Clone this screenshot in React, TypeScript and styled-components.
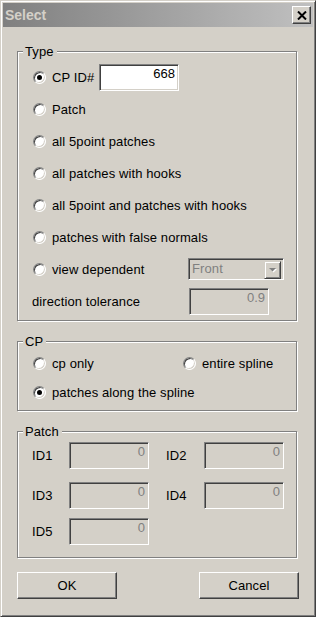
import styled, { createGlobalStyle } from 'styled-components';
import { ReactElement, ReactNode } from 'react';

const GlobalStyle = createGlobalStyle`
  html,
  body {
    margin: 0;
    padding: 0;
    background: #d4d0c8;
  }

  body {
    font-family: "Liberation Sans", Arial, sans-serif;
    font-size: 13px;
    letter-spacing: 0.1px;
    color: #000;
  }
`;

const Window = styled.div`
  box-sizing: border-box;
  display: flex;
  flex-direction: column;
  width: 316px;
  height: 617px;
  padding: 2px;
  background: #d4d0c8;
  border: 1px solid;
  border-color: #d4d0c8 #404040 #404040 #d4d0c8;
  box-shadow: inset 1px 1px #fff, inset -1px -1px #808080;
`;

const TitleBar = styled.div`
  display: flex;
  align-items: center;
  justify-content: space-between;
  height: 24px;
  padding: 0 2px;
  background: linear-gradient(to right, #808080, #c0c0c0);
`;

const Title = styled.span`
  font-size: 14px;
  font-weight: bold;
  letter-spacing: 0;
  color: #d4d0c8;
`;

const CloseButton = styled.button`
  box-sizing: border-box;
  display: flex;
  align-items: center;
  justify-content: center;
  width: 19px;
  height: 18px;
  padding: 0;
  background: #d4d0c8;
  border: 1px solid;
  border-color: #fff #404040 #404040 #fff;
  box-shadow: inset -1px -1px #808080;
`;

const Body = styled.div`
  display: flex;
  flex-direction: column;
  padding: 24px 0 0 14px;
`;

const Group = styled.div<{ $gap?: number }>`
  box-sizing: border-box;
  width: 280px;
  margin-top: ${(p) => p.$gap ?? 0}px;
  border: 1px solid #808080;
  box-shadow: inset 1px 1px #fff, 1px 1px 0 #fff;
`;

const GroupLabel = styled.div`
  width: fit-content;
  margin: -8px 0 -7px 5px;
  padding: 0 3px 0 2px;
  line-height: 15px;
  background: #d4d0c8;
`;

const GroupBody = styled.div<{ $top: number; $bottom: number }>`
  padding: ${(p) => p.$top}px 0 ${(p) => p.$bottom}px;
`;

const Row = styled.div<{ $height?: number; $indent?: number; $gap?: number }>`
  display: flex;
  align-items: center;
  height: ${(p) => p.$height ?? 32}px;
  margin-top: ${(p) => p.$gap ?? 0}px;
  padding-left: ${(p) => p.$indent ?? 15}px;
`;

const Option = styled.label<{ $width?: number }>`
  display: flex;
  align-items: center;
  flex-shrink: 0;
  gap: 6px;
  width: ${(p) => (p.$width ? `${p.$width}px` : 'auto')};
  line-height: 15px;
`;

const RadioDot = styled.span<{ $checked?: boolean }>`
  box-sizing: border-box;
  display: flex;
  align-items: center;
  justify-content: center;
  width: 13px;
  height: 13px;
  background: #fff;
  border: 1px solid;
  border-color: #808080 #fff #fff #808080;
  border-radius: 50%;
  box-shadow: inset 1px 1px #404040, inset -1px -1px #d4d0c8;

  &::after {
    content: '';
    display: ${(p) => (p.$checked ? 'block' : 'none')};
    width: 5px;
    height: 5px;
    background: #000;
    border-radius: 50%;
  }
`;

const FieldLabel = styled.span<{ $width: number; $offset?: number }>`
  flex-shrink: 0;
  width: ${(p) => p.$width}px;
  margin-left: ${(p) => p.$offset ?? 0}px;
  line-height: 15px;
`;

const Edit = styled.input<{ $width?: number }>`
  box-sizing: border-box;
  width: ${(p) => p.$width ?? 80}px;
  height: 27px;
  margin: 0;
  padding: 0 3px 8px 2px;
  font: inherit;
  line-height: 15px;
  text-align: right;
  color: #000;
  background: #fff;
  border: 1px solid;
  border-color: #808080 #fff #fff #808080;
  border-radius: 0;
  box-shadow: inset 1px 1px #404040, inset -1px -1px #d4d0c8;
  outline: none;

  &:disabled {
    color: #808080;
    background: #d4d0c8;
  }
`;

const Combo = styled.div`
  box-sizing: border-box;
  display: flex;
  width: 96px;
  height: 22px;
  padding: 2px;
  color: #808080;
  background: #d4d0c8;
  border: 1px solid;
  border-color: #808080 #fff #fff #808080;
  box-shadow: inset 1px 1px #404040, inset -1px -1px #d4d0c8;
`;

const ComboText = styled.span`
  flex: 1;
  padding-left: 1px;
  line-height: 16px;
`;

const ComboButton = styled.span`
  box-sizing: border-box;
  display: flex;
  align-items: center;
  justify-content: center;
  width: 17px;
  height: 18px;
  background: #d4d0c8;
  border: 1px solid;
  border-color: #d4d0c8 #404040 #404040 #d4d0c8;
  box-shadow: inset 1px 1px #fff, inset -1px -1px #808080;
`;

const Footer = styled.div`
  display: flex;
  justify-content: space-between;
  margin-top: 14px;
  padding-right: 14px;
`;

const PushButton = styled.button`
  box-sizing: border-box;
  width: 100px;
  height: 27px;
  padding: 0;
  font: inherit;
  letter-spacing: 0.1px;
  color: #000;
  background: #d4d0c8;
  border: 1px solid;
  border-color: #fff #404040 #404040 #fff;
  box-shadow: inset -1px -1px #808080;
`;

type RadioProps = {
  label: string;
  checked?: boolean;
  width?: number;
};

const Radio = ({ label, checked, width }: RadioProps): ReactElement => (
  <Option $width={width}>
    <RadioDot $checked={checked} />
    {label}
  </Option>
);

const Box = ({
  title,
  gap,
  top,
  bottom,
  children,
}: {
  title: string;
  gap?: number;
  top: number;
  bottom: number;
  children: ReactNode;
}): ReactElement => (
  <Group $gap={gap}>
    <GroupLabel>{title}</GroupLabel>
    <GroupBody $top={top} $bottom={bottom}>
      {children}
    </GroupBody>
  </Group>
);

const typeOptions = [
  'Patch',
  'all 5point patches',
  'all patches with hooks',
  'all 5point and patches with hooks',
  'patches with false normals',
];

export default function App(): ReactElement {
  return (
    <Window>
      <GlobalStyle />
      <TitleBar>
        <Title>Select</Title>
        <CloseButton aria-label="Close">
          <svg width="10" height="9" viewBox="0 0 10 9">
            <path d="M1 0.5L9 8.5M9 0.5L1 8.5" stroke="#000" strokeWidth="2" />
          </svg>
        </CloseButton>
      </TitleBar>

      <Body>
        <Box title="Type" top={9} bottom={3}>
          <Row>
            <Radio label="CP ID#" checked width={66} />
            <Edit readOnly defaultValue="668" />
          </Row>
          {typeOptions.map((label) => (
            <Row key={label}>
              <Radio label={label} />
            </Row>
          ))}
          <Row>
            <Radio label="view dependent" width={155} />
            <Combo>
              <ComboText>Front</ComboText>
              <ComboButton>
                <svg width="8" height="5" viewBox="0 0 8 5">
                  <path d="M1 1H8L4.5 4.5Z" fill="#fff" />
                  <path d="M0 0H7L3.5 3.5Z" fill="#808080" />
                </svg>
              </ComboButton>
            </Combo>
          </Row>
          <Row $indent={14}>
            <FieldLabel $width={157}>direction tolerance</FieldLabel>
            <Edit disabled defaultValue="0.9" />
          </Row>
        </Box>

        <Box title="CP" gap={20} top={7} bottom={3}>
          <Row $height={29}>
            <Radio label="cp only" width={150} />
            <Radio label="entire spline" />
          </Row>
          <Row $height={29}>
            <Radio label="patches along the spline" checked />
          </Row>
        </Box>

        <Box title="Patch" gap={20} top={10} bottom={12}>
          <Row $height={27} $indent={14}>
            <FieldLabel $width={37}>ID1</FieldLabel>
            <Edit disabled defaultValue="0" />
            <FieldLabel $width={38} $offset={17}>
              ID2
            </FieldLabel>
            <Edit disabled defaultValue="0" />
          </Row>
          <Row $height={27} $indent={14} $gap={13}>
            <FieldLabel $width={37}>ID3</FieldLabel>
            <Edit disabled defaultValue="0" />
            <FieldLabel $width={38} $offset={17}>
              ID4
            </FieldLabel>
            <Edit disabled defaultValue="0" />
          </Row>
          <Row $height={27} $indent={14} $gap={9}>
            <FieldLabel $width={37}>ID5</FieldLabel>
            <Edit disabled defaultValue="0" />
          </Row>
        </Box>

        <Footer>
          <PushButton>OK</PushButton>
          <PushButton>Cancel</PushButton>
        </Footer>
      </Body>
    </Window>
  );
}
